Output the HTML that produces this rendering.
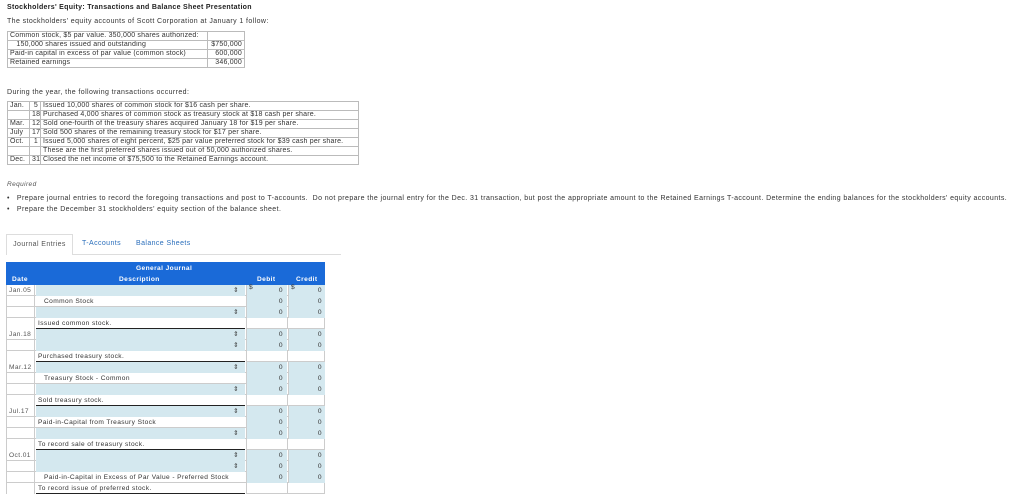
<!DOCTYPE html>
<html><head><meta charset="utf-8"><style>
*{margin:0;padding:0;box-sizing:border-box}
body{width:1024px;height:500px;background:#fff;font-family:"Liberation Sans",sans-serif;font-size:7px;letter-spacing:0.4px;color:#333;position:relative;overflow:hidden}
.a{position:absolute;white-space:nowrap}
table{border-collapse:collapse;position:absolute;table-layout:fixed}
.t1 td,.t2 td{border:1px solid #bbb;height:9px;line-height:8px;padding:0 2px;font-size:7px;white-space:nowrap;overflow:hidden;letter-spacing:0.2px}
.r{text-align:right}
.j{position:absolute;left:6px;top:262px;width:319px}
.row{position:absolute;left:0;width:319px;height:11px}
.c{position:absolute;top:0;height:11px;line-height:11px;font-size:6.6px;white-space:nowrap}
.bl{background:#d4e8ef}
</style></head><body>
<div class="a" style="left:7px;top:4px;font-weight:bold;color:#222;letter-spacing:0.3px">Stockholders' Equity: Transactions and Balance Sheet Presentation</div>
<div class="a" style="left:7px;top:18px">The stockholders' equity accounts of Scott Corporation at January 1 follow:</div>
<table class="t1" style="left:7px;top:31px;width:237px">
<colgroup><col style="width:200px"><col style="width:37px"></colgroup>
<tr><td>Common stock, $5 par value. 350,000 shares authorized:</td><td></td></tr>
<tr><td>&nbsp;&nbsp;&nbsp;150,000 shares issued and outstanding</td><td class="r">$750,000</td></tr>
<tr><td>Paid-in capital in excess of par value (common stock)</td><td class="r">600,000</td></tr>
<tr><td>Retained earnings</td><td class="r">346,000</td></tr>
</table>
<div class="a" style="left:7px;top:89px">During the year, the following transactions occurred:</div>
<table class="t2" style="left:7px;top:101px;width:351px">
<colgroup><col style="width:22px"><col style="width:11px"><col style="width:318px"></colgroup>
<tr><td>Jan.</td><td class="r">5</td><td>Issued 10,000 shares of common stock for $16 cash per share.</td></tr>
<tr><td></td><td class="r">18</td><td>Purchased 4,000 shares of common stock as treasury stock at $18 cash per share.</td></tr>
<tr><td>Mar.</td><td class="r">12</td><td>Sold one-fourth of the treasury shares acquired January 18 for $19 per share.</td></tr>
<tr><td>July</td><td class="r">17</td><td>Sold 500 shares of the remaining treasury stock for $17 per share.</td></tr>
<tr><td>Oct.</td><td class="r">1</td><td>Issued 5,000 shares of eight percent, $25 par value preferred stock for $39 cash per share.</td></tr>
<tr><td></td><td></td><td>These are the first preferred shares issued out of 50,000 authorized shares.</td></tr>
<tr><td>Dec.</td><td class="r">31</td><td>Closed the net income of $75,500 to the Retained Earnings account.</td></tr>
</table>
<div class="a" style="left:7px;top:181px;font-style:italic;color:#555;font-size:6.5px">Required</div>
<div class="a" style="left:7px;top:195px">•&nbsp;&nbsp; Prepare journal entries to record the foregoing transactions and post to T-accounts.&nbsp; Do not prepare the journal entry for the Dec. 31 transaction, but post the appropriate amount to the Retained Earnings T-account. Determine the ending balances for the stockholders' equity accounts.</div>
<div class="a" style="left:7px;top:206px">•&nbsp;&nbsp; Prepare the December 31 stockholders' equity section of the balance sheet.</div>
<div class="a" style="left:6px;top:254px;width:335px;border-top:1px solid #ddd"></div>
<div class="a" style="left:6px;top:234px;width:67px;height:21px;border:1px solid #ddd;border-bottom:none;background:#fff;line-height:19px;text-align:center;color:#555">Journal Entries</div>
<div class="a" style="left:82px;top:240px;color:#2a6ebb">T-Accounts</div>
<div class="a" style="left:136px;top:240px;color:#2a6ebb">Balance Sheets</div>
<div class="j">
<div class="row" style="top:0;height:23px;background:#1a6ad8;color:#fff;font-weight:bold">
<div class="c" style="left:130px;top:1px">General Journal</div>
<div class="c" style="left:6px;top:12px">Date</div>
<div class="c" style="left:113px;top:12px">Description</div>
<div class="c" style="left:251px;top:12px">Debit</div>
<div class="c" style="left:290px;top:12px">Credit</div>
</div>
<div id="rows"></div>
</div>
<script>
var R=[["Jan.05","",1,1,1,"$"],["","Common Stock",0,1,1],["","",1,1,1],["","Issued common stock.",2],
["Jan.18","",1,1,1],["","",1,1,1],["","Purchased treasury stock.",2],
["Mar.12","",1,1,1],["","Treasury Stock - Common",0,1,1],["","",1,1,1],["","Sold treasury stock.",2],
["Jul.17","",1,1,1],["","Paid-in-Capital from Treasury Stock",0,1,1],["","",1,1,1],["","To record sale of treasury stock.",2],
["Oct.01","",1,1,1],["","",1,1,1],["","Paid-in-Capital in Excess of Par Value - Preferred Stock",0,1,1],["","To record issue of preferred stock.",2]];
var h="";R.forEach(function(r,i){var y=23+i*11;var memo=r[2]==2;
h+='<div class="row" style="top:'+y+'px;border-bottom:1px solid '+(memo?'#fff':'#ccc')+'">';
h+='<div class="c" style="left:0;width:29px;padding-left:2px;border-right:1px solid #ccc;border-left:1px solid #ccc;color:#555">'+r[0]+'</div>';
var ind=(r[1]&&!memo&&r[1]!="Paid-in-Capital from Treasury Stock")?' padding-left:8px;':' padding-left:2px;';
h+='<div class="c '+(r[2]==1?'bl':'')+'" style="left:30px;width:209px;'+ind+(memo?'border-bottom:1px solid #222;':'')+'">'+r[1]+(r[2]==1?'<span style="position:absolute;right:6px">&#8661;</span>':'')+'</div>';
if(!memo){h+='<div class="c bl" style="left:240px;width:41px;border-left:1px solid #ccc;text-align:right;padding-right:4px">'+(r[5]?'<span style="position:absolute;left:2px;top:-3px">$</span>':'')+'0</div>';
h+='<div class="c bl" style="left:282px;width:37px;border-left:1px solid #ccc;text-align:right;padding-right:3px">'+(r[5]?'<span style="position:absolute;left:2px;top:-3px">$</span>':'')+'0</div>';}
else{h+='<div class="c" style="left:240px;width:79px;border-left:1px solid #ccc;border-right:1px solid #ccc;border-bottom:1px solid #ccc"></div><div class="c" style="left:281px;width:1px;background:#ccc"></div>';}
h+='</div>';});
document.getElementById("rows").innerHTML=h;
</script>
</body></html>
